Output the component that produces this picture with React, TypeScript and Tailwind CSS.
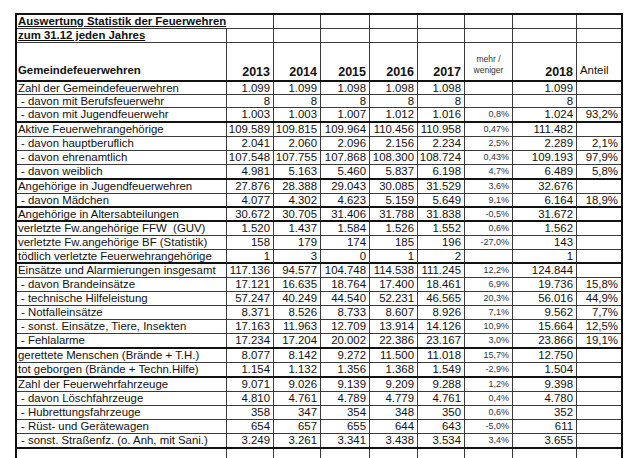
import React from "react";

type StatRow = {
  label: string;
  sub?: boolean;
  years: string[];
  delta: string;
  y2018: string;
  share: string;
  h: string;
  thick?: boolean;
};

const GRID = "grid grid-cols-[210px_47px_47px_49px_48px_47px_48px_64px_44px]";
const V = "border-r border-[#3a3a3a]";

const ROWS: StatRow[] = [
  { label: "Zahl der Gemeindefeuerwehren", years: ["1.099", "1.099", "1.098", "1.098", "1.098"], delta: "", y2018: "1.099", share: "", h: "h-[13px]" },
  { label: "- davon mit Berufsfeuerwehr", sub: true, years: ["8", "8", "8", "8", "8"], delta: "", y2018: "8", share: "", h: "h-[13px]" },
  { label: "- davon mit Jugendfeuerwehr", sub: true, years: ["1.003", "1.003", "1.007", "1.012", "1.016"], delta: "0,8%", y2018: "1.024", share: "93,2%", h: "h-[15px]", thick: true },
  { label: "Aktive Feuerwehrangehörige", years: ["109.589", "109.815", "109.964", "110.456", "110.958"], delta: "0,47%", y2018: "111.482", share: "", h: "h-[14px]" },
  { label: "- davon hauptberuflich", sub: true, years: ["2.041", "2.060", "2.096", "2.156", "2.234"], delta: "2,5%", y2018: "2.289", share: "2,1%", h: "h-[14px]" },
  { label: "- davon ehrenamtlich", sub: true, years: ["107.548", "107.755", "107.868", "108.300", "108.724"], delta: "0,43%", y2018: "109.193", share: "97,9%", h: "h-[14px]" },
  { label: "- davon weiblich", sub: true, years: ["4.981", "5.163", "5.460", "5.837", "6.198"], delta: "4,7%", y2018: "6.489", share: "5,8%", h: "h-[15px]", thick: true },
  { label: "Angehörige in Jugendfeuerwehren", years: ["27.876", "28.388", "29.043", "30.085", "31.529"], delta: "3,6%", y2018: "32.676", share: "", h: "h-[14px]" },
  { label: "- davon Mädchen", sub: true, years: ["4.077", "4.302", "4.623", "5.159", "5.649"], delta: "9,1%", y2018: "6.164", share: "18,9%", h: "h-[14px]", thick: true },
  { label: "Angehörige in Altersabteilungen", years: ["30.672", "30.705", "31.406", "31.788", "31.838"], delta: "-0,5%", y2018: "31.672", share: "", h: "h-[14px]", thick: true },
  { label: "verletzte Fw.angehörige FFW  (GUV)", years: ["1.520", "1.437", "1.584", "1.526", "1.552"], delta: "0,6%", y2018: "1.562", share: "", h: "h-[14px]" },
  { label: "verletzte Fw.angehörige BF (Statistik)", years: ["158", "179", "174", "185", "196"], delta: "-27,0%", y2018: "143", share: "", h: "h-[14px]" },
  { label: "tödlich verletzte Feuerwehrangehörige", years: ["1", "3", "0", "1", "2"], delta: "", y2018: "1", share: "", h: "h-[14px]", thick: true },
  { label: "Einsätze und Alarmierungen insgesamt", years: ["117.136", "94.577", "104.748", "114.538", "111.245"], delta: "12,2%", y2018: "124.844", share: "", h: "h-[14px]" },
  { label: "- davon Brandeinsätze", sub: true, years: ["17.121", "16.635", "18.764", "17.400", "18.461"], delta: "6,9%", y2018: "19.736", share: "15,8%", h: "h-[14px]" },
  { label: "- technische Hilfeleistung", sub: true, years: ["57.247", "40.249", "44.540", "52.231", "46.565"], delta: "20,3%", y2018: "56.016", share: "44,9%", h: "h-[14px]" },
  { label: "- Notfalleinsätze", sub: true, years: ["8.371", "8.526", "8.733", "8.607", "8.926"], delta: "7,1%", y2018: "9.562", share: "7,7%", h: "h-[14px]" },
  { label: "- sonst. Einsätze, Tiere, Insekten", sub: true, years: ["17.163", "11.963", "12.709", "13.914", "14.126"], delta: "10,9%", y2018: "15.664", share: "12,5%", h: "h-[14px]" },
  { label: "- Fehlalarme", sub: true, years: ["17.234", "17.204", "20.002", "22.386", "23.167"], delta: "3,0%", y2018: "23.866", share: "19,1%", h: "h-[15px]", thick: true },
  { label: "gerettete Menschen (Brände + T.H.)", years: ["8.077", "8.142", "9.272", "11.500", "11.018"], delta: "15,7%", y2018: "12.750", share: "", h: "h-[14px]" },
  { label: "tot geborgen (Brände + Techn.Hilfe)", years: ["1.154", "1.132", "1.356", "1.368", "1.549"], delta: "-2,9%", y2018: "1.504", share: "", h: "h-[15px]", thick: true },
  { label: "Zahl der Feuerwehrfahrzeuge", years: ["9.071", "9.026", "9.139", "9.209", "9.288"], delta: "1,2%", y2018: "9.398", share: "", h: "h-[14px]" },
  { label: "- davon Löschfahrzeuge", sub: true, years: ["4.810", "4.761", "4.789", "4.779", "4.761"], delta: "0,4%", y2018: "4.780", share: "", h: "h-[14px]" },
  { label: "- Hubrettungsfahrzeuge", sub: true, years: ["358", "347", "354", "348", "350"], delta: "0,6%", y2018: "352", share: "", h: "h-[14px]" },
  { label: "- Rüst- und Gerätewagen", sub: true, years: ["654", "657", "655", "644", "643"], delta: "-5,0%", y2018: "611", share: "", h: "h-[14px]" },
  { label: "- sonst. Straßenfz. (o. Anh, mit Sani.)", sub: true, years: ["3.249", "3.261", "3.341", "3.438", "3.534"], delta: "3,4%", y2018: "3.655", share: "", h: "h-[15px]", thick: true },
];

function DataRow({ row }: { row: StatRow }) {
  const bottom = row.thick ? "border-b-2 border-b-[#111]" : "border-b border-b-[#3a3a3a]";
  return (
    <div className={`${GRID} ${row.h} ${bottom} leading-[13px]`}>
      <div className={`${V} flex items-center whitespace-pre ${row.sub ? "pl-[4px]" : "pl-[1px]"}`}>
        {row.label}
      </div>
      {row.years.map((v, i) => (
        <div key={i} className={`${V} flex items-center justify-end pr-[3px]`}>
          {v}
        </div>
      ))}
      <div className={`${V} flex items-center justify-end pr-[3px] text-[9px] text-[#333]`}>
        {row.delta}
      </div>
      <div className={`${V} flex items-center justify-end pr-[3px]`}>{row.y2018}</div>
      <div className="flex items-center justify-end pr-[3px]">{row.share}</div>
    </div>
  );
}

export default function App() {
  return (
    <div className="h-[458px] overflow-hidden bg-white font-['Liberation_Sans',Arial,sans-serif] text-[11.4px] text-[#111]">
      <div className="ml-[15px] mt-[13px] w-[608px] border-l-2 border-r-2 border-t-2 border-[#111]">
        {/* title rows */}
        <div className={`${GRID} h-[14px] border-b border-b-[#3a3a3a] leading-[13px]`}>
          <div className={`${V} col-span-2 pl-[1px] font-bold underline`}>
            Auswertung Statistik der Feuerwehren
          </div>
          <div className={V} />
          <div className={V} />
          <div className={V} />
          <div className={V} />
          <div className={V} />
          <div className={V} />
          <div />
        </div>
        <div className={`${GRID} h-[14px] border-b border-b-[#3a3a3a] leading-[13px]`}>
          <div className={`${V} pl-[1px] font-bold underline`}>zum 31.12 jeden Jahres</div>
          <div className={V} />
          <div className={V} />
          <div className={V} />
          <div className={V} />
          <div className={V} />
          <div className={V} />
          <div className={V} />
          <div />
        </div>

        {/* header */}
        <div className={`${GRID} h-[39px] border-b-2 border-b-[#111]`}>
          <div className={`${V} flex items-end pl-[1px] pb-[1px] font-bold`}>Gemeindefeuerwehren</div>
          {["2013", "2014", "2015", "2016", "2017"].map((y) => (
            <div key={y} className={`${V} flex items-end justify-end pr-[3px] text-[12.5px] font-bold leading-[15px]`}>
              {y}
            </div>
          ))}
          <div className={`${V} flex flex-col items-center justify-end pb-[4px] text-[8.5px] leading-[11px] text-[#333]`}>
            <span>mehr /</span>
            <span>weniger</span>
          </div>
          <div className={`${V} flex items-end justify-end pr-[3px] text-[12.5px] font-bold leading-[15px]`}>2018</div>
          <div className="flex items-end pl-[3px] pb-[1px]">Anteil</div>
        </div>

        {ROWS.map((r) => (
          <DataRow key={r.label} row={r} />
        ))}

        <div className={`${GRID} h-[14px]`}>
          {Array.from({ length: 8 }).map((_, i) => (
            <div key={i} className={V} />
          ))}
          <div />
        </div>
      </div>
    </div>
  );
}
